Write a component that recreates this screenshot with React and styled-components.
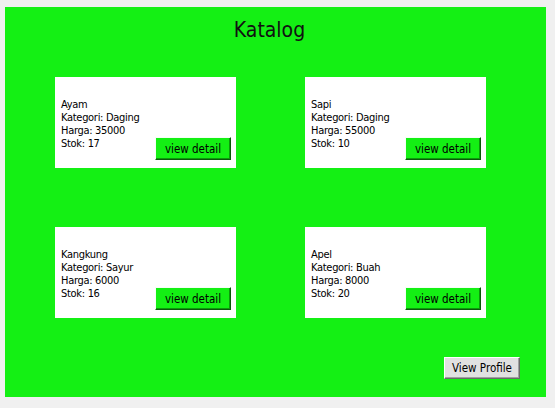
import React from "react";
import styled, { createGlobalStyle } from "styled-components";

const GlobalStyle = createGlobalStyle`
  html, body {
    margin: 0;
    padding: 0;
    background: #f0f0f0;
  }
  body {
    font-family: "DejaVu Sans Condensed", "DejaVu Sans", sans-serif;
  }
`;

const Panel = styled.div`
  margin: 7px 9px 0 5px;
  width: 541px;
  height: 390px;
  background: #14f014;
  display: flex;
  flex-direction: column;
  box-sizing: border-box;
`;

const Title = styled.h1`
  margin: 0;
  padding: 10px 12px 0 0;
  height: 55px;
  box-sizing: border-box;
  text-align: center;
  font-family: "DejaVu Sans Condensed", "DejaVu Sans", sans-serif;
  font-weight: normal;
  font-size: 21px;
  line-height: 26px;
  color: #111;
`;

const Grid = styled.div`
  display: grid;
  grid-template-columns: 181px 181px;
  grid-auto-rows: 91px;
  column-gap: 69px;
  row-gap: 59px;
  margin-top: 15px;
  margin-left: 50px;
`;

const Card = styled.div`
  background: #fff;
  display: flex;
  align-items: flex-end;
  justify-content: space-between;
  padding: 0 5px 8px 6px;
`;

const Info = styled.div`
  margin-bottom: 10px;
  font-size: 11px;
  line-height: 13px;
  letter-spacing: -0.3px;
  color: #000;
`;

const Button = styled.button`
  width: ${({ w }) => w}px;
  height: ${({ h }) => h}px;
  padding: 0;
  font-family: "DejaVu Sans Condensed", "DejaVu Sans", sans-serif;
  font-size: 11.5px;
  color: #000;
  background: ${({ bg }) => bg};
  border: 1px solid;
  border-color: ${({ edge }) => edge};
  box-shadow: inset -1px -1px 0 ${({ shade }) => shade};
  cursor: pointer;
`;

const Footer = styled.div`
  margin-top: auto;
  display: flex;
  justify-content: flex-end;
  padding: 0 26px 18px 0;
`;

const products = [
  { nama: "Ayam", kategori: "Daging", harga: 35000, stok: 17 },
  { nama: "Sapi", kategori: "Daging", harga: 55000, stok: 10 },
  { nama: "Kangkung", kategori: "Sayur", harga: 6000, stok: 16 },
  { nama: "Apel", kategori: "Buah", harga: 8000, stok: 20 },
];

export default function App() {
  return (
    <>
      <GlobalStyle />
      <Panel>
        <Title>Katalog</Title>
        <Grid>
          {products.map((p) => (
            <Card key={p.nama}>
              <Info>
                <div>{p.nama}</div>
                <div>Kategori: {p.kategori}</div>
                <div>Harga: {p.harga}</div>
                <div>Stok: {p.stok}</div>
              </Info>
              <Button
                w={76}
                h={23}
                bg="#14f014"
                edge="#f4fff4 #0a5a0a #0a5a0a #f4fff4"
                shade="#0c9a0c"
              >
                view detail
              </Button>
            </Card>
          ))}
        </Grid>
        <Footer>
          <Button
            w={76}
            h={22}
            bg="#e1e1e1"
            edge="#fff #6a6a6a #6a6a6a #fff"
            shade="#a0a0a0"
          >
            View Profile
          </Button>
        </Footer>
      </Panel>
    </>
  );
}
